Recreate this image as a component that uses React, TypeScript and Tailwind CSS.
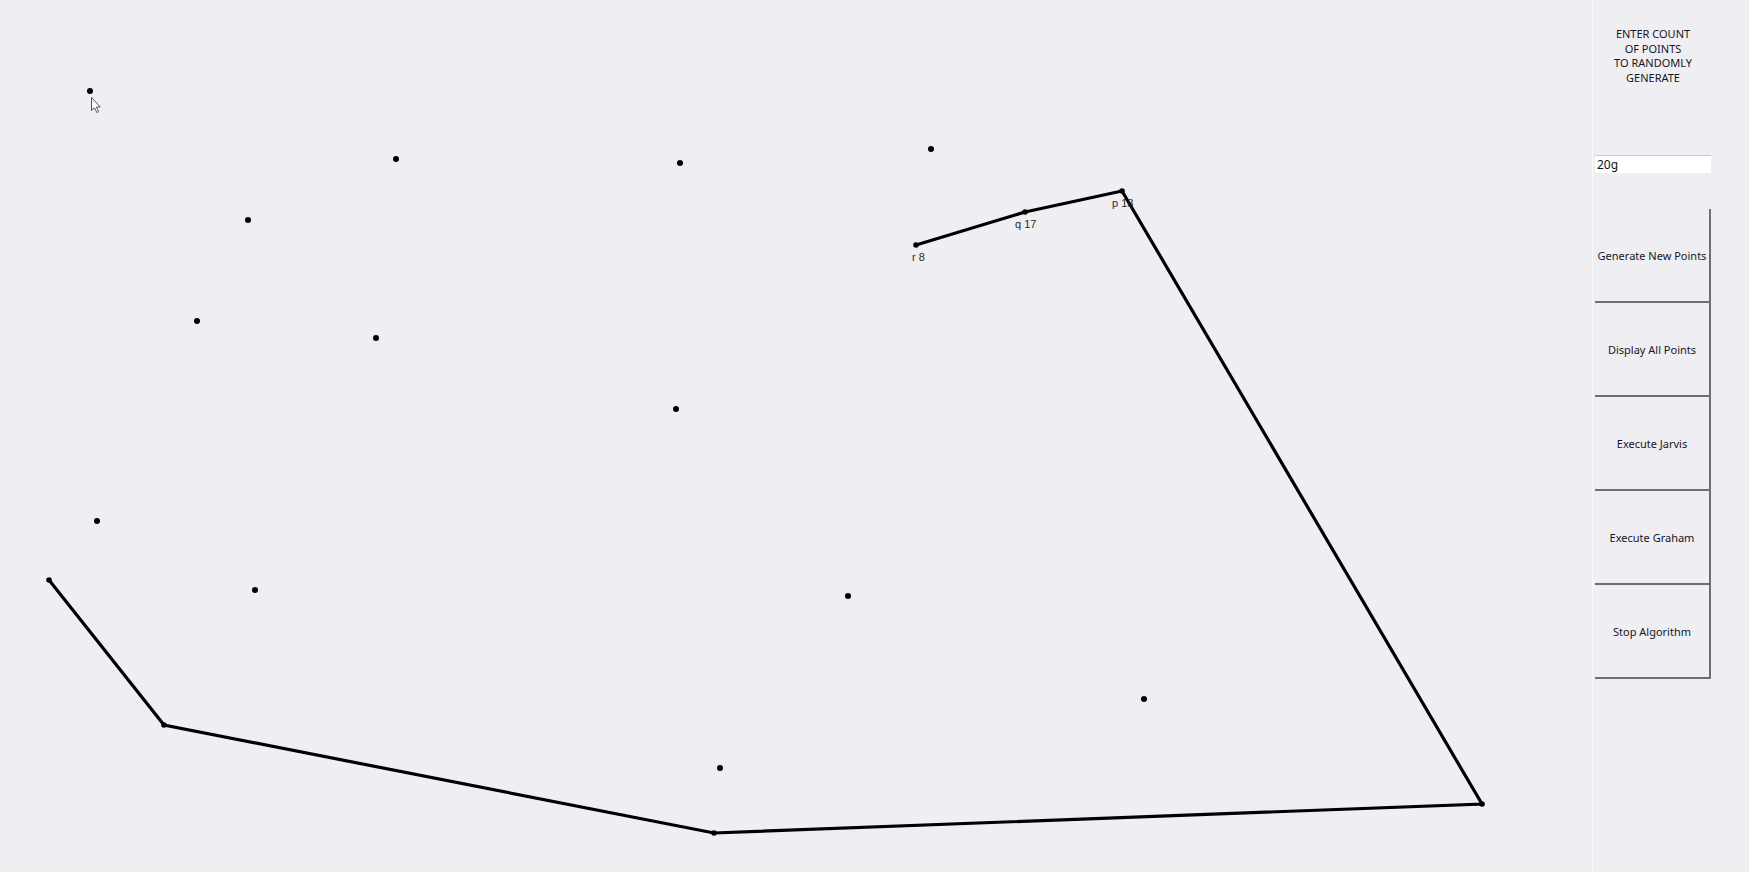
import React from 'react';

type Pt = [number, number];

const points: Pt[] = [
  [90, 91],
  [396, 159],
  [680, 163],
  [931, 149],
  [248, 220],
  [197, 321],
  [376, 338],
  [676, 409],
  [97, 521],
  [255, 590],
  [848, 596],
  [1144, 699],
  [720, 768],
];

// current hull path of the running algorithm
const hull: Pt[] = [
  [49, 580],
  [164, 725],
  [714, 833],
  [1482, 804],
  [1122, 191],
  [1025, 212],
  [916, 245],
];

const labels = [
  { x: 912, y: 261, text: 'r 8' },
  { x: 1015, y: 228, text: 'q 17' },
  { x: 1112, y: 207, text: 'p 18' },
];

const buttons = [
  'Generate New Points',
  'Display All Points',
  'Execute Jarvis',
  'Execute Graham',
  'Stop Algorithm',
];

function Canvas() {
  return (
    <div className="relative flex-1 h-full">
      <svg width="1592" height="872" className="block">
        <polyline
          points={hull.map((p) => p.join(',')).join(' ')}
          fill="none"
          stroke="#000"
          strokeWidth={3.2}
          strokeLinejoin="miter"
        />
        {hull.map(([x, y], i) => (
          <circle key={`h${i}`} cx={x} cy={y} r={2.8} fill="#000" />
        ))}
        {points.map(([x, y], i) => (
          <circle key={i} cx={x} cy={y} r={3} fill="#000" />
        ))}
        {labels.map((l) => (
          <text
            key={l.text}
            x={l.x}
            y={l.y}
            fontSize={11}
            fill="#2a2a2a"
            fontFamily="'Liberation Sans', Arial, sans-serif"
          >
            {l.text}
          </text>
        ))}
        {/* mouse cursor */}
        <path
          d="M91.5 97.5 L91.5 110.5 L94.5 107.8 L96.8 112.5 L98.6 111.6 L96.4 107 L100.3 107 Z"
          fill="#fff"
          stroke="#555"
          strokeWidth={1}
          strokeLinejoin="round"
        />
      </svg>
    </div>
  );
}

function SidePanel() {
  return (
    <div className="w-[157px] h-full border-l border-[#fbfbfd] pl-[2px] flex flex-col">
      <div className="w-[116px] pt-[27px] text-center text-[11px] leading-[14.5px] text-[#15151f] font-['Noto_Sans',sans-serif]">
        <div>ENTER COUNT</div>
        <div>OF POINTS</div>
        <div>TO RANDOMLY</div>
        <div>GENERATE</div>
      </div>
      <input
        defaultValue="20g"
        className="mt-[70px] w-[116px] h-[18px] bg-white border-t border-[#c8c8d0] px-[2px] text-[12px] text-[#111] font-['Noto_Sans',sans-serif] outline-none"
      />
      <div className="mt-[36px] w-[116px] flex flex-col">
        {buttons.map((b) => (
          <button
            key={b}
            className="h-[94px] w-full pt-[2px] border-r-2 border-b-2 border-[#6e6e72] text-[11px] text-[#15151f] font-['Noto_Sans',sans-serif] bg-transparent"
          >
            {b}
          </button>
        ))}
      </div>
    </div>
  );
}

export default function App() {
  return (
    <div className="w-[1749px] h-[872px] bg-[#efeff3] flex overflow-hidden">
      <Canvas />
      <SidePanel />
    </div>
  );
}
